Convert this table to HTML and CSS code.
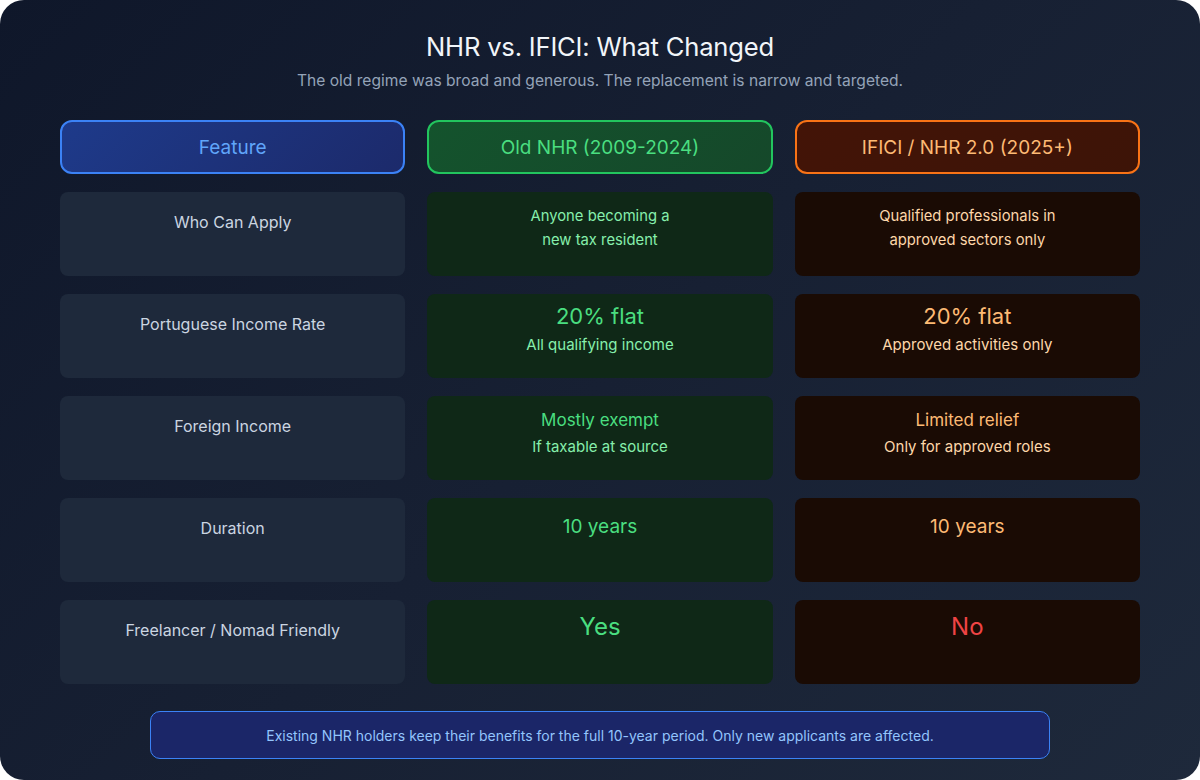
FILE: index.html
```html
<!DOCTYPE html>
<html lang="en">
<head>
<meta charset="utf-8">
<title>NHR vs. IFICI</title>
<link rel="stylesheet" href="styles.css">
</head>
<body>
<div class="panel">
  <h1 class="title">NHR vs. IFICI: What Changed</h1>
  <p class="subtitle">The old regime was broad and generous. The replacement is narrow and targeted.</p>
  <div class="grid">
    <div class="head head-blue">Feature</div>
    <div class="head head-green">Old NHR (2009-2024)</div>
    <div class="head head-orange">IFICI / NHR 2.0 (2025+)</div>

    <div class="cell label">Who Can Apply</div>
    <div class="cell green two">Anyone becoming a<br>new tax resident</div>
    <div class="cell orange two">Qualified professionals in<br>approved sectors only</div>

    <div class="cell label">Portuguese Income Rate</div>
    <div class="cell green pt8"><div class="main lg">20% flat</div><div class="sub">All qualifying income</div></div>
    <div class="cell orange pt8"><div class="main lg">20% flat</div><div class="sub">Approved activities only</div></div>

    <div class="cell label">Foreign Income</div>
    <div class="cell green pt12"><div class="main md">Mostly exempt</div><div class="sub">If taxable at source</div></div>
    <div class="cell orange pt12"><div class="main md">Limited relief</div><div class="sub">Only for approved roles</div></div>

    <div class="cell label">Duration</div>
    <div class="cell green pt15"><div class="main yr">10 years</div></div>
    <div class="cell orange pt15"><div class="main yr">10 years</div></div>

    <div class="cell label">Freelancer / Nomad Friendly</div>
    <div class="cell green pt11"><div class="main xl">Yes</div></div>
    <div class="cell orange pt11"><div class="main xl no">No</div></div>
  </div>
  <div class="note">Existing NHR holders keep their benefits for the full 10-year period. Only new applicants are affected.</div>
</div>
</body>
</html>
```

FILE: styles.css
```css
* { box-sizing: border-box; }
html, body { margin: 0; padding: 0; background: #ffffff; }
body {
  font-family: Inter, "Noto Sans", "Liberation Sans", sans-serif;
  width: 1200px;
  height: 780px;
}
.panel {
  width: 1200px;
  height: 780px;
  border-radius: 24px;
  background: linear-gradient(135deg, #0f172a 0%, #172033 50%, #1e293b 100%);
  padding-top: 31px;
  overflow: hidden;
}
.title {
  margin: 0;
  text-align: center;
  font-size: 25.6px;
  line-height: 32px;
  font-weight: 400;
  color: #f1f5f9;
  letter-spacing: -0.2px;
}
.subtitle {
  margin: 6px 0 0;
  text-align: center;
  font-size: 15.6px;
  line-height: 24px;
  color: #94a3b8;
}
.grid {
  margin-top: 27px;
  padding: 0 60px;
  display: grid;
  grid-template-columns: repeat(3, 1fr);
  column-gap: 22px;
  row-gap: 18px;
  grid-auto-rows: 84px;
  grid-template-rows: 54px;
}
.head {
  display: flex;
  align-items: center;
  justify-content: center;
  border: 2px solid;
  border-radius: 12px;
  font-size: 19px;
}
.head-blue {
  border-color: #3b82f6;
  background: linear-gradient(135deg, #1e3a8a 0%, #1c2a6b 100%);
  color: #60a5fa;
}
.head-green {
  border-color: #22c55e;
  background: linear-gradient(135deg, #14532d 0%, #15482a 100%);
  color: #4ade80;
}
.head-orange {
  border-color: #f97316;
  background: linear-gradient(135deg, #431407 0%, #3d1407 100%);
  color: #fdba74;
}
.cell {
  border-radius: 8px;
  text-align: center;
}
.label {
  background: #1e293b;
  color: #cbd5e1;
  font-size: 16px;
  line-height: 24px;
  padding-top: 18px;
}
.green { background: #0f2817; color: #86efac; }
.orange { background: #1a0b04; color: #fed7aa; }
.two {
  font-size: 14.8px;
  line-height: 24px;
  padding-top: 12px;
}
.pt8 { padding-top: 8px; }
.pt12 { padding-top: 12px; }
.pt15 { padding-top: 15px; }
.pt11 { padding-top: 11px; }
.green .main { color: #4ade80; }
.orange .main { color: #fdba74; }
.main.lg { font-size: 22px; line-height: 28px; }
.main.md { font-size: 17px; line-height: 24px; }
.main.yr { font-size: 19px; line-height: 28px; }
.main.xl { font-size: 24px; line-height: 32px; }
.orange .main.no { color: #ef4444; }
.sub {
  margin-top: 3px;
  font-size: 15px;
  line-height: 24px;
}
.note {
  width: 900px;
  height: 48px;
  margin: 27px auto 0;
  border: 1.5px solid #3b82f6;
  border-radius: 10px;
  background: #1b2668;
  color: #93c5fd;
  font-size: 14px;
  display: flex;
  align-items: center;
  justify-content: center;
}
```
